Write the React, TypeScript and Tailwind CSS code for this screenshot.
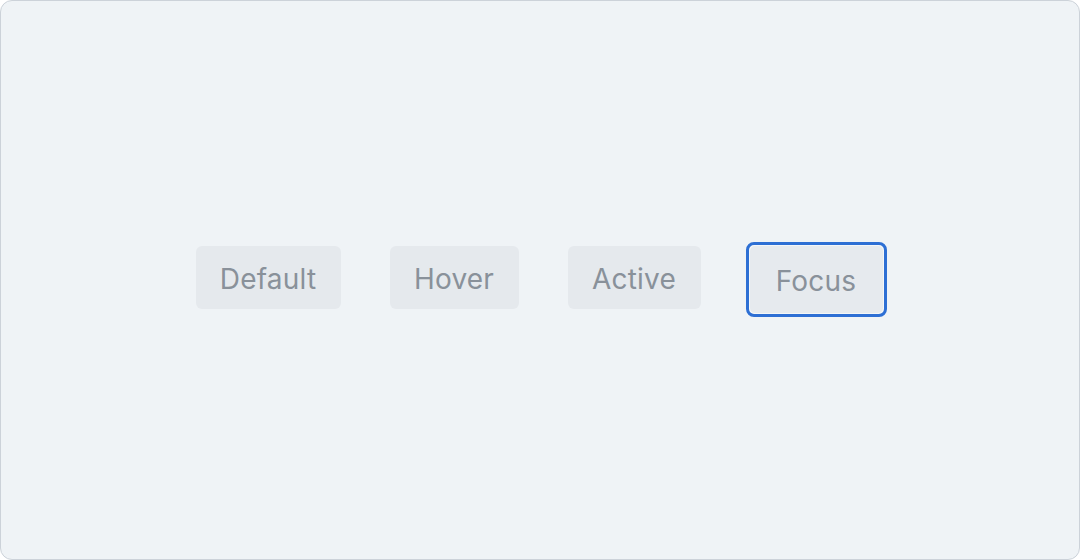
export default function App() {
  const btn =
    "flex h-[63px] items-center justify-center rounded-[6px] bg-[#e5e9ed] pt-[2px] text-[28px] tracking-[0.2px] text-[#89919a] mt-[4px]";
  return (
    <div
      className="flex h-[560px] w-[1080px] items-start justify-center gap-[49px] rounded-[12px] border border-[#ccd2d9] bg-[#eff3f6] pl-[2px] pt-[241px]"
      style={{ fontFamily: "Inter, 'Noto Sans', sans-serif" }}
    >
      <div className={btn + " w-[145px]"}>Default</div>
      <div className={btn + " w-[129px]"}>Hover</div>
      <div className={btn + " w-[133px]"}>Active</div>
      <div className="ml-[-4px] flex h-[75px] w-[141px] rounded-[8px] border-[3px] border-[#2d6fd4] bg-[#f3f6f8] p-[1px]">
        <div className="flex flex-1 items-center justify-center rounded-[5px] bg-[#e6eaee] pt-[2px] text-[28px] tracking-[0.2px] text-[#89919a]">
          Focus
        </div>
      </div>
    </div>
  );
}
